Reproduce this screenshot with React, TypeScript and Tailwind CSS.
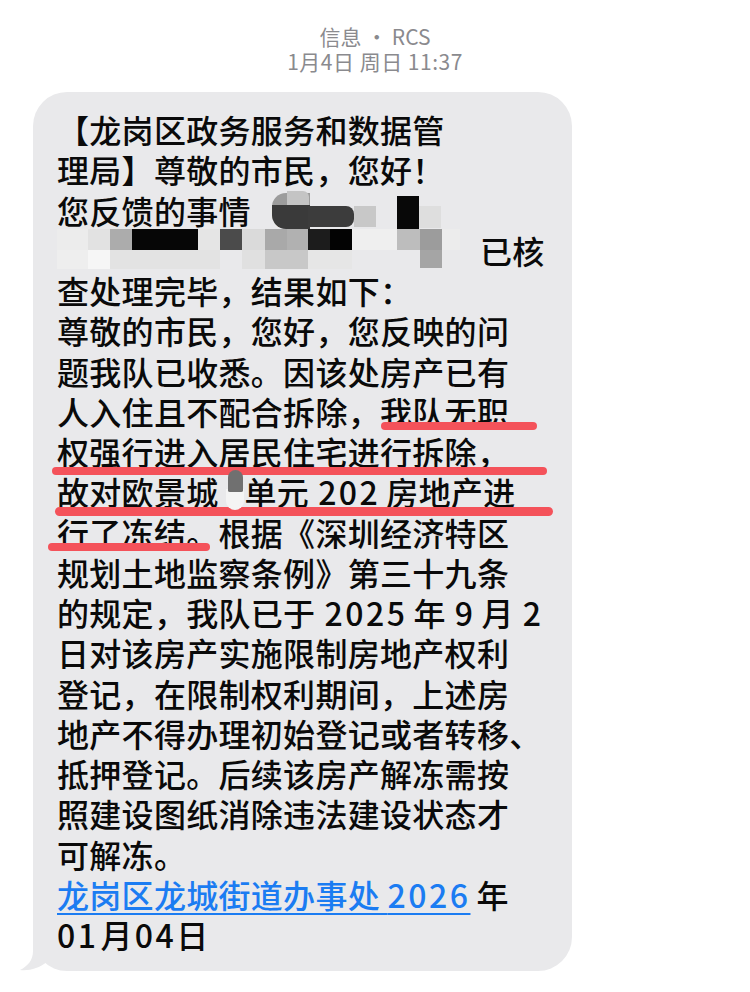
import React from 'react';

// page coords of the bubble's top-left corner
const BX = 33;
const BY = 93;

type Rect = { x: number; y: number; w: number; h: number; c: string; r?: string };

// pixelated redaction over lines 3 and 4 (page coords)
const mosaic: Rect[] = [
  { x: 272, y: 194, w: 38, h: 14, c: '#9c9c9c', r: '14px 0 0 0' },
  { x: 287, y: 192, w: 22, h: 15, c: '#c4c4c4', r: '0 6px 0 0' },
  { x: 272, y: 206, w: 38, h: 24, c: '#3a3a3a', r: '0 0 0 14px' },
  { x: 308, y: 207, w: 46, h: 21, c: '#3c3c3c', r: '0 8px 8px 0' },
  { x: 354, y: 207, w: 22, h: 21, c: '#c8c8c8' },
  { x: 397, y: 197, w: 22, h: 33, c: '#080808' },
  { x: 419, y: 207, w: 22, h: 22, c: '#dedede' },

  { x: 57, y: 230, w: 31, h: 21, c: '#ececec' },
  { x: 88, y: 230, w: 22, h: 21, c: '#e2e2e2' },
  { x: 110, y: 230, w: 22, h: 21, c: '#acacac' },
  { x: 132, y: 230, w: 66, h: 21, c: '#060606' },
  { x: 198, y: 230, w: 22, h: 21, c: '#e5e5e5' },
  { x: 220, y: 230, w: 22, h: 21, c: '#4b4b4b' },
  { x: 242, y: 230, w: 23, h: 21, c: '#dadada' },
  { x: 265, y: 230, w: 22, h: 21, c: '#a9a9a9' },
  { x: 287, y: 230, w: 21, h: 21, c: '#b1b1b1' },
  { x: 308, y: 230, w: 22, h: 21, c: '#1c1c1c' },
  { x: 330, y: 230, w: 22, h: 21, c: '#030303' },
  { x: 352, y: 230, w: 45, h: 21, c: '#efefef' },
  { x: 397, y: 230, w: 23, h: 21, c: '#bdbdbd' },
  { x: 420, y: 230, w: 22, h: 21, c: '#9c9c9c' },
  { x: 442, y: 230, w: 18, h: 21, c: '#ececec' },

  { x: 57, y: 251, w: 31, h: 19, c: '#eeeeee' },
  { x: 88, y: 251, w: 22, h: 19, c: '#f6f6f6' },
  { x: 110, y: 251, w: 110, h: 19, c: '#e3e3e3' },
  { x: 242, y: 251, w: 23, h: 19, c: '#e0e0e0' },
  { x: 265, y: 251, w: 43, h: 19, c: '#c8c8c8' },
  { x: 308, y: 251, w: 44, h: 19, c: '#e6e6e6' },
  { x: 420, y: 251, w: 22, h: 18, c: '#a5a5a5' },
];

// hand-drawn red underlines (page coords)
const marks: Rect[] = [
  { x: 381, y: 423, w: 156, h: 8, c: '#f4525a' },
  { x: 52, y: 468, w: 495, h: 8, c: '#f4525a' },
  { x: 55, y: 508, w: 498, h: 9, c: '#f4525a' },
  { x: 48, y: 544, w: 162, h: 8, c: '#f4525a' },
];

// small redaction after 欧景城
const dot: Rect[] = [
  { x: 226, y: 490, w: 18, h: 21, c: '#f4f4f4', r: '0 0 9px 9px' },
  { x: 228, y: 471, w: 15, h: 22, c: '#707070', r: '8px 8px 2px 2px' },
];

function Box({ x, y, w, h, c, r }: Rect) {
  return (
    <div
      className="absolute"
      style={{ left: x - BX, top: y - BY, width: w, height: h, background: c, borderRadius: r ?? 0 }}
    />
  );
}

// digits get a little air around them, like iOS does between CJK and latin
function N({ children, l = true, r = true }: { children: React.ReactNode; l?: boolean; r?: boolean }) {
  return (
    <span className={`tracking-[2.5px] ${l ? 'ml-[9px]' : ''} ${r ? 'mr-[6px]' : ''}`}>{children}</span>
  );
}

const lines: React.ReactNode[] = [
  '【龙岗区政务服务和数据管',
  '理局】尊敬的市民，您好！',
  '您反馈的事情（',
  <span className="inline-block pl-[423px]">已核</span>,
  '查处理完毕，结果如下：',
  '尊敬的市民，您好，您反映的问',
  '题我队已收悉。因该处房产已有',
  '人入住且不配合拆除，我队无职',
  '权强行进入居民住宅进行拆除，',
  <>
    故对欧景城<span className="inline-block w-[26px]" />单元<N>202</N>房地产进
  </>,
  '行了冻结。根据《深圳经济特区',
  '规划土地监察条例》第三十九条',
  <>
    的规定，我队已于<N>2025</N>年<N>9</N>月<N r={false}>2</N>
  </>,
  '日对该房产实施限制房地产权利',
  '登记，在限制权利期间，上述房',
  '地产不得办理初始登记或者转移、',
  '抵押登记。后续该房产解冻需按',
  '照建设图纸消除违法建设状态才',
  '可解冻。',
  <>
    <span className="text-[#1b7cf2] underline decoration-[1.5px] underline-offset-[5px]">
      龙岗区龙城街道办事处{'\u00a0'}
      <span className="tracking-[2.5px]">2026</span>
    </span>
    <span className="ml-[6px]">年</span>
  </>,
  <>
    <N l={false} r={false}>01</N>
    <span className="mx-[2px]">月</span>
    <N l={false} r={false}>04</N>
    日
  </>,
];

export default function App() {
  return (
    <div className="min-h-screen bg-white font-['Noto_Sans_CJK_SC',sans-serif]">
      <div className="pt-[24px] text-center text-[21px] leading-[25px] text-[#8a8a8e]">
        <div>信息 • RCS</div>
        <div className="tracking-[0.5px]">1月4日 周日 11:37</div>
      </div>

      <div className="relative ml-[33px] mt-[18px] w-[539px] rounded-[34px] bg-[#e9e9eb] px-[24px] py-[17px] text-[32px] font-medium leading-[40.25px] tracking-[0.3px] text-[#0a0a0a]">
        <svg
          className="absolute bottom-0 left-[-18px]"
          width="70"
          height="50"
          viewBox="15 922 70 50"
        >
          <path
            d="M33 922 L33 952 C33 961 28 967 20 971 C30 972 39 969 47 963 C55 969 65 972 85 972 L85 922 Z"
            fill="#e9e9eb"
          />
        </svg>

        <div className="relative">
          {lines.map((l, i) => (
            <div key={i} className="whitespace-nowrap">
              {l}
            </div>
          ))}
        </div>

        {mosaic.map((m, i) => (
          <Box key={'m' + i} {...m} />
        ))}
        {marks.map((m, i) => (
          <div
            key={'r' + i}
            className="absolute rounded-full"
            style={{ left: m.x - BX, top: m.y - BY, width: m.w, height: m.h, background: m.c }}
          />
        ))}
        {dot.map((m, i) => (
          <Box key={'d' + i} {...m} />
        ))}
      </div>
    </div>
  );
}
